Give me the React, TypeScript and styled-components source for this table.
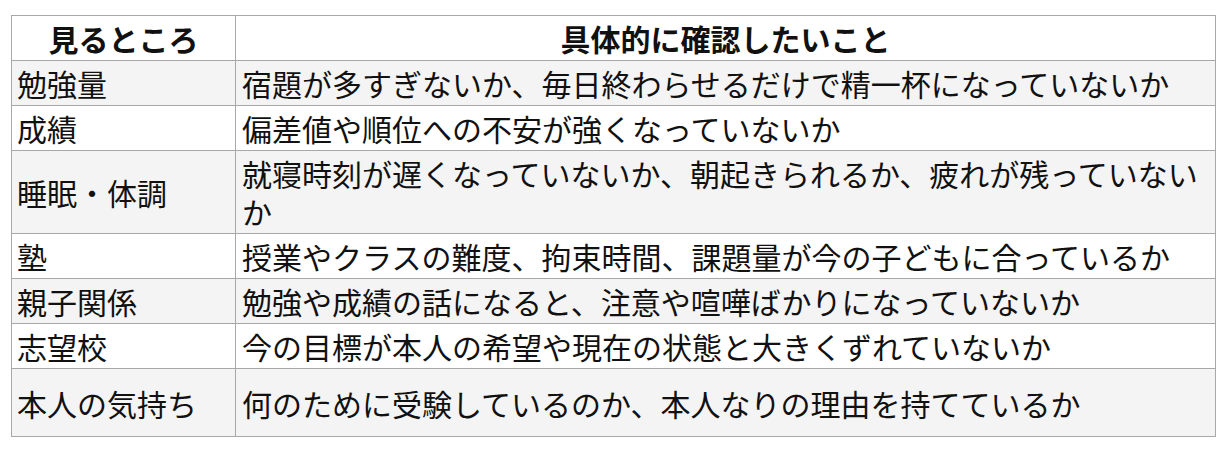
import React from "react";
import styled, { createGlobalStyle } from "styled-components";

const GlobalStyle = createGlobalStyle`
  html, body {
    margin: 0;
    padding: 0;
    background: #ffffff;
  }
  body {
    font-family: "Noto Sans CJK JP", "Liberation Serif", serif;
    color: #111111;
  }
`;

const Page = styled.div`
  padding: 15px 0 0 11px;
`;

const Table = styled.table`
  width: 1205px;
  border-collapse: collapse;
  table-layout: fixed;
  font-size: 30px;
  line-height: 38px;
`;

const Row = styled.tr<{ $shade?: boolean; $tall?: boolean }>`
  background: ${(p) => (p.$shade ? "#f4f4f4" : "#ffffff")};
  height: ${(p) => (p.$tall ? "68px" : "auto")};
`;

const HeadCell = styled.th<{ $w?: number }>`
  box-sizing: border-box;
  border: 1px solid #a8a8a8;
  padding: 3px 6px 3px;
  font-weight: 700;
  text-align: center;
  vertical-align: middle;
  width: ${(p) => (p.$w ? `${p.$w}px` : "auto")};
`;

const Cell = styled.td`
  box-sizing: border-box;
  border: 1px solid #a8a8a8;
  padding: 3px 4px 3px 6px;
  text-align: left;
  vertical-align: middle;
  font-weight: 400;
`;

const LabelCell = styled(Cell)`
  padding-left: 5px;
`;

const rows: { label: string; text: string; tall?: boolean }[] = [
  { label: "勉強量", text: "宿題が多すぎないか、毎日終わらせるだけで精一杯になっていないか" },
  { label: "成績", text: "偏差値や順位への不安が強くなっていないか" },
  { label: "睡眠・体調", text: "就寝時刻が遅くなっていないか、朝起きられるか、疲れが残っていないか" },
  { label: "塾", text: "授業やクラスの難度、拘束時間、課題量が今の子どもに合っているか" },
  { label: "親子関係", text: "勉強や成績の話になると、注意や喧嘩ばかりになっていないか" },
  { label: "志望校", text: "今の目標が本人の希望や現在の状態と大きくずれていないか" },
  { label: "本人の気持ち", text: "何のために受験しているのか、本人なりの理由を持てているか", tall: true },
];

export default function App() {
  return (
    <>
      <GlobalStyle />
      <Page>
        <Table>
          <thead>
            <Row>
              <HeadCell $w={224}>見るところ</HeadCell>
              <HeadCell>具体的に確認したいこと</HeadCell>
            </Row>
          </thead>
          <tbody>
            {rows.map((r, i) => (
              <Row key={r.label} $shade={i % 2 === 0} $tall={r.tall}>
                <LabelCell>{r.label}</LabelCell>
                <Cell>{r.text}</Cell>
              </Row>
            ))}
          </tbody>
        </Table>
      </Page>
    </>
  );
}
